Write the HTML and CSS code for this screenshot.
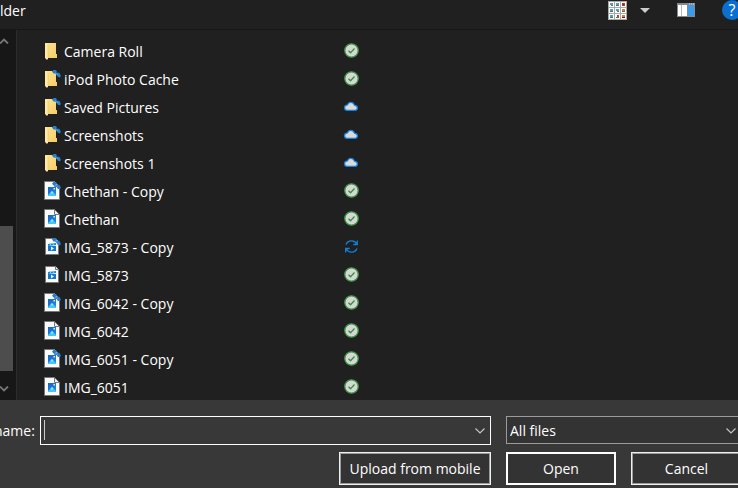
FILE: index.html
```html
<!DOCTYPE html>
<html lang="en">
<head>
<meta charset="utf-8">
<title>Open</title>
<link rel="stylesheet" href="styles.css">
</head>
<body>
<svg class="symbols" aria-hidden="true">
  <defs>
    <linearGradient id="gold" x1="0" x2="1" y1="0" y2="1"><stop offset="0" stop-color="#ffe391"/><stop offset="1" stop-color="#f5cd68"/></linearGradient>
    <linearGradient id="sky" x1="0" x2="1" y1="0" y2="1"><stop offset="0" stop-color="#1465c8"/><stop offset="1" stop-color="#2c86e8"/></linearGradient>
  </defs>
  <symbol id="folder" viewBox="0 0 18 20">
    <path d="M1 2h11v11h1v4H1z" fill="url(#gold)"/>
    <path d="M1 2l3 2v13.500l-1 1.500-2-2z" fill="#ffe9a8"/>
    <path d="M4 4v13" stroke="#e9bd58" stroke-width=".5"/>
  </symbol>
  <symbol id="image" viewBox="0 0 18 20">
    <path d="M.5 .5h10l5 5v13H.5z" fill="#fafafa" stroke="#777"/>
    <path d="M11 0h5v5z" fill="#202020"/>
    <path d="M10.500 .5v5h5z" fill="#eee" stroke="#777"/>
    <path d="M4 6h8v9H4z" fill="url(#sky)"/>
    <path d="M4 14l4-4 4 4v1H4z" fill="#43c7f5"/>
    <path d="M6.500 11.500L8 10l1.500 1.500L8 13z" fill="#8de5ff"/>
    <path d="M9.500 7h1.500v1.500H9.500z" fill="#d7efff"/>
  </symbol>
  <symbol id="video" viewBox="0 0 18 20">
    <path d="M1.500 1.500h10l3 3v13h-13z" fill="#fafafa" stroke="#777"/>
    <path d="M11.500 1.500v3h3" fill="#eee" stroke="#777"/>
    <path d="M4 7l8-1v2l-8 1z" fill="#1687d9"/>
    <path d="M4 9h8v5H4z" fill="#1279ce"/>
    <path d="M6 6.500l1 2M9 6.200l1 2" stroke="#7bd4fa"/>
    <path d="M7 9.500l3 2-3 2z" fill="#e9fbff"/>
  </symbol>
  <symbol id="link" viewBox="0 0 10 10">
    <path d="M1 2.500L2.500 1h2.500l1 2-1.500 1.500h-2z" fill="#2a7cc6"/>
    <path d="M5 5l1.500-1.500 2 .5 1.500 3-1.500 1.500-2-1z" fill="#2a7cc6"/>
    <path d="M4 3.500l3 2.500" stroke="#3d95de" stroke-width="1.500"/>
  </symbol>
  <symbol id="ok" viewBox="0 0 16 16">
    <circle cx="8.500" cy="8.500" r="6.700" fill="#d6d6d6" stroke="#3c9a44" stroke-width="1.300"/>
    <path d="M5.500 8.700l2 2 4-4.200" fill="none" stroke="#2f9139" stroke-width="1.300"/>
  </symbol>
  <symbol id="cloud" viewBox="0 0 16 16">
    <path d="M4 12.400a2.700 2.700 0 0 1-.5-5.300l1-.3a3.500 3.500 0 0 1 6.500-.5l.8 1a2.600 2.600 0 0 1 .7 5.100z" fill="#dadada" stroke="#1180e0" stroke-width="1.300"/>
  </symbol>
  <symbol id="sync" viewBox="0 0 16 16">
    <path d="M3 6.500a6 6 0 0 1 10.800-.5M14.300 2.500v4h-4M14 10.500a6 6 0 0 1-10.800.5M2.700 14.500v-4h4" fill="none" stroke="#1180e0" stroke-width="1.300"/>
  </symbol>
  <symbol id="down" viewBox="0 0 10 6"><path d="M.5.500L5 5 9.500.500" fill="none" stroke="currentColor" stroke-width="1.200"/></symbol>
  <symbol id="scroll" viewBox="0 0 10 6"><path d="M1 .500L5 4.500 9 .500" fill="none" stroke="currentColor" stroke-width="1.800"/></symbol>
</svg>

<div class="dialog">
  <header class="toolbar">
    <button class="tool new-folder">lder</button>
    <button class="tool" aria-label="Change your view">
      <svg width="19" height="19" viewBox="0 0 19 19">
        <path d="M0 0h19v19H0z" fill="#a9a9a9"/>
        <path d="M1 1h5v5H1zM7 1h5v5H7zM13 1h5v5h-5zM1 7h5v5H1zM7 7h5v5H7zM13 7h5v5h-5zM1 13h5v5H1zM7 13h5v5H7zM13 13h5v5h-5z" fill="#fff"/>
        <path d="M2 2h3v2H2zM8 8h3v2H8zM2 8h3v2H2zM2 14h3v2H2zM8 2h3v2H8z" fill="#5b9bd5"/>
        <path d="M14 8h3v2h-3zM14 14h3v2h-3z" fill="#c98345"/>
        <path d="M14 2h3v3h-3zM9 14h2v2H9z" fill="#c8352b"/>
        <path d="M3 4h2v1H3zM8 4h3v1H8zM2 10h3v1H2zM9 10h2v1H9zM14 10h3v1h-3zM2 16h3v1H2zM8 16h3v1H8z" fill="#478445"/>
        <path d="M14 16h3v1h-3zM15 3h1v1h-1z" fill="#7c1717"/>
      </svg>
    </button>
    <button class="tool view-more" aria-label="More options">
      <svg width="10" height="5" viewBox="0 0 10 5"><path d="M0 0h10L5 5z" fill="#ccc"/></svg>
    </button>
    <button class="tool preview" aria-label="Show the preview pane">
      <svg width="18" height="14" viewBox="0 0 18 14">
        <path d="M0 0h18v14H0z" fill="#858a90"/>
        <path d="M1 2h3v11H1zM5 2h5v11H5z" fill="#fff"/>
        <path d="M4 2h1v11H4z" fill="#bbb"/>
        <path d="M11 2h6v11h-6z" fill="#3c9be8"/>
        <path d="M12 1h1M14 1h1M16 1h1" stroke="#ddd"/>
      </svg>
    </button>
    <button class="tool help" aria-label="Get help">?</button>
  </header>

  <main class="browser">
    <div class="scrollbar" aria-hidden="true">
      <svg class="arrow up" width="10" height="6"><use href="#scroll"/></svg>
      <div class="track"><div class="thumb"></div></div>
      <svg class="arrow" width="10" height="6"><use href="#scroll"/></svg>
    </div>
    <ul class="files">
      <li><svg class="kind"><use href="#folder"/></svg><span class="name">Camera Roll</span><svg class="status"><use href="#ok"/></svg></li>
      <li><svg class="kind"><use href="#folder"/></svg><svg class="badge"><use href="#link"/></svg><span class="name">iPod Photo Cache</span><svg class="status"><use href="#ok"/></svg></li>
      <li><svg class="kind"><use href="#folder"/></svg><svg class="badge"><use href="#link"/></svg><span class="name">Saved Pictures</span><svg class="status"><use href="#cloud"/></svg></li>
      <li><svg class="kind"><use href="#folder"/></svg><svg class="badge"><use href="#link"/></svg><span class="name">Screenshots</span><svg class="status"><use href="#cloud"/></svg></li>
      <li><svg class="kind"><use href="#folder"/></svg><svg class="badge"><use href="#link"/></svg><span class="name">Screenshots 1</span><svg class="status"><use href="#cloud"/></svg></li>
      <li><svg class="kind"><use href="#image"/></svg><svg class="badge"><use href="#link"/></svg><span class="name">Chethan - Copy</span><svg class="status"><use href="#ok"/></svg></li>
      <li><svg class="kind"><use href="#image"/></svg><span class="name">Chethan</span><svg class="status"><use href="#ok"/></svg></li>
      <li><svg class="kind"><use href="#video"/></svg><svg class="badge"><use href="#link"/></svg><span class="name">IMG_5873 - Copy</span><svg class="status"><use href="#sync"/></svg></li>
      <li><svg class="kind"><use href="#video"/></svg><span class="name">IMG_5873</span><svg class="status"><use href="#ok"/></svg></li>
      <li><svg class="kind"><use href="#image"/></svg><svg class="badge"><use href="#link"/></svg><span class="name">IMG_6042 - Copy</span><svg class="status"><use href="#ok"/></svg></li>
      <li><svg class="kind"><use href="#image"/></svg><span class="name">IMG_6042</span><svg class="status"><use href="#ok"/></svg></li>
      <li><svg class="kind"><use href="#image"/></svg><svg class="badge"><use href="#link"/></svg><span class="name">IMG_6051 - Copy</span><svg class="status"><use href="#ok"/></svg></li>
      <li><svg class="kind"><use href="#image"/></svg><span class="name">IMG_6051</span><svg class="status"><use href="#ok"/></svg></li>
    </ul>
  </main>

  <footer class="actions">
    <div class="line">
      <label class="label" for="filename">name:</label>
      <div class="combo">
        <input id="filename" type="text">
        <span class="caret"></span>
        <svg class="chevron" width="10" height="6"><use href="#down"/></svg>
      </div>
      <div class="filter">
        <select aria-label="File type"><option>All files</option></select>
        <svg class="chevron" width="10" height="6"><use href="#down"/></svg>
      </div>
    </div>
    <div class="line buttons">
      <button class="button upload">Upload from mobile</button>
      <button class="button primary">Open</button>
      <button class="button">Cancel</button>
    </div>
  </footer>
</div>
</body>
</html>
```
FILE: styles.css
```css
* { box-sizing: border-box; }

body {
  margin: 0;
  overflow: hidden;
  background: #383838;
  color: #fff;
  font: 14px/20px "Open Sans", "Noto Sans", sans-serif;
}

button, input, select { font: inherit; color: inherit; }

.symbols { position: absolute; width: 0; height: 0; }

/* The dialog runs a little past the right edge of the window. */
.dialog { width: calc(100% + 4px); }

.toolbar {
  display: flex;
  align-items: center;
  height: 30px;
  padding-bottom: 9px;
  background: #202020;
  border-bottom: 1px solid #171717;
}
.tool {
  display: flex;
  padding: 0;
  border: 0;
  background: none;
}
.new-folder { margin-right: auto; padding-top: 2px; }
.view-more { margin-left: 13px; }
.preview { margin-left: 27px; }
.help {
  justify-content: center;
  width: 20px;
  height: 20px;
  margin-left: 27px;
  border-radius: 50%;
  background: #0a6fd0;
  font-size: 16px;
}

.browser { display: flex; background: #202020; }

.scrollbar {
  display: flex;
  flex-direction: column;
  align-items: center;
  width: 21px;
  margin-left: -4px;
  padding: 8px 4px 8px 0;
  background: #171717;
  border-right: 1px solid #2b2b2b;
  color: #777;
}
.arrow { flex: none; }
.up { transform: rotate(180deg); }
.track {
  display: flex;
  flex: 1;
  flex-direction: column;
  justify-content: flex-end;
  align-self: stretch;
  padding: 12px 0 15px;
}
.thumb { height: 46%; margin-right: -1px; background: #4d4d4d; }

.files {
  flex: 1;
  margin: 0;
  padding: 6px 0 0 27px;
  list-style: none;
}
.files li {
  position: relative;
  display: flex;
  align-items: center;
  height: 28px;
}
.kind { width: 18px; height: 20px; margin: 2px 2px 0 0; }
.badge { position: absolute; left: 7px; top: 5px; width: 10px; height: 10px; }
.name { width: 279px; padding-top: 4px; }
.status { width: 16px; height: 16px; }

.actions { padding: 16px 0 3px; background: #383838; }
.line { display: flex; }
.label { width: 43px; margin-left: -6px; padding-top: 5px; }
.combo, .filter { position: relative; height: 29px; }
.combo { flex: 1; margin: 0 15px 0 3px; }
.filter { width: 236px; height: 28px; }
.combo input, .filter select {
  width: 100%;
  height: 100%;
  padding: 0 3px;
  border: 1px solid #fff;
  border-radius: 0;
  outline: 0;
  background: #383838;
  appearance: none;
}
.filter select { padding-top: 2px; border-color: #9b9b9b; background: #333; }
.caret { position: absolute; left: 4px; top: 4px; width: 1px; height: 20px; background: #ccc; }
.chevron { position: absolute; right: 6px; top: 12px; color: #c4c4c4; pointer-events: none; }

.buttons { justify-content: flex-end; gap: 15px; margin-top: 7px; }
.button {
  width: 111px;
  height: 33px;
  padding: 0;
  border: 1px solid #f0f0f0;
  background: #333;
  box-shadow: inset 0 0 0 1px #9b9b9b;
}
.upload { width: 152px; }
.primary { width: 110px; border-color: #fff; box-shadow: inset 0 0 0 1px #fff; }
```
